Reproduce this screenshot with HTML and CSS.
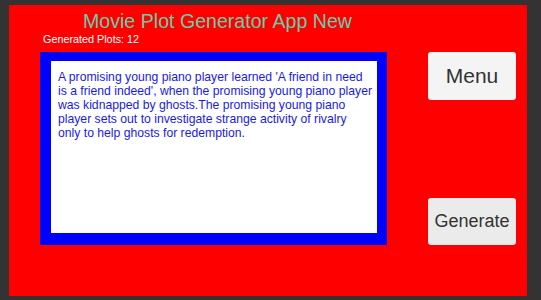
FILE: index.html
```html
<!DOCTYPE html>
<html lang="en">
<head>
    <meta charset="UTF-8">
    <title>Movie Plot Generator App New</title>
    <link rel="stylesheet" href="styles.css">
</head>
<body>

<div id="screen">
    <div id="main">
        <h1 id="title">Movie Plot Generator App New</h1>
        <div id="counter">Generated Plots: 12</div>
        <div id="plot-frame">
            <div id="plot">A promising young piano player learned 'A friend in need is a friend indeed', when the promising young piano player was kidnapped by ghosts.The promising young piano player sets out to investigate strange activity of rivalry<br>only to help ghosts for redemption.</div>
        </div>
    </div>
    <div id="side">
        <button id="menu-button">Menu</button>
        <button id="generate-button">Generate</button>
    </div>
</div>

</body>
</html>
```

FILE: styles.css
```css
html, body {
    margin: 0;
    height: 100%;
}
body {
    background-color: #333333;
    font-family: "Liberation Sans", Arial, sans-serif;
    padding: 5px 14px 4px 9px;
    box-sizing: border-box;
}
#screen {
    display: flex;
    height: 100%;
    background-color: #ff0000;
    padding-left: 31px;
}
#main {
    width: 347px;
}
#title {
    margin: 0;
    padding: 5px 0 0 43px;
    font-size: 19.6px;
    font-weight: normal;
    line-height: 22px;
    color: #66cdaa;
}
#counter {
    margin-left: 3px;
    font-size: 10.8px;
    line-height: 14px;
    color: #ffffff;
}
#plot-frame {
    margin-top: 6px;
    height: 193px;
    box-sizing: border-box;
    background-color: #0000ff;
    padding: 9px 10px 12px 11px;
}
#plot {
    height: 100%;
    box-sizing: border-box;
    background-color: #ffffff;
    padding: 9px 4.5px 0 7px;
    font-size: 12.2px;
    line-height: 14px;
    color: #1a1ae6;
}
#side {
    display: flex;
    flex-direction: column;
    margin-left: 41px;
    padding-top: 47px;
}
#side button {
    width: 88px;
    border: none;
    border-radius: 3px;
    font-family: "Liberation Sans", Arial, sans-serif;
    color: #333333;
    cursor: pointer;
}
#menu-button {
    height: 48px;
    background-color: #f4f4f4;
    font-size: 21px;
}
#generate-button {
    height: 47px;
    margin-top: 98px;
    background-color: #ebebeb;
    font-size: 18px;
}
```
